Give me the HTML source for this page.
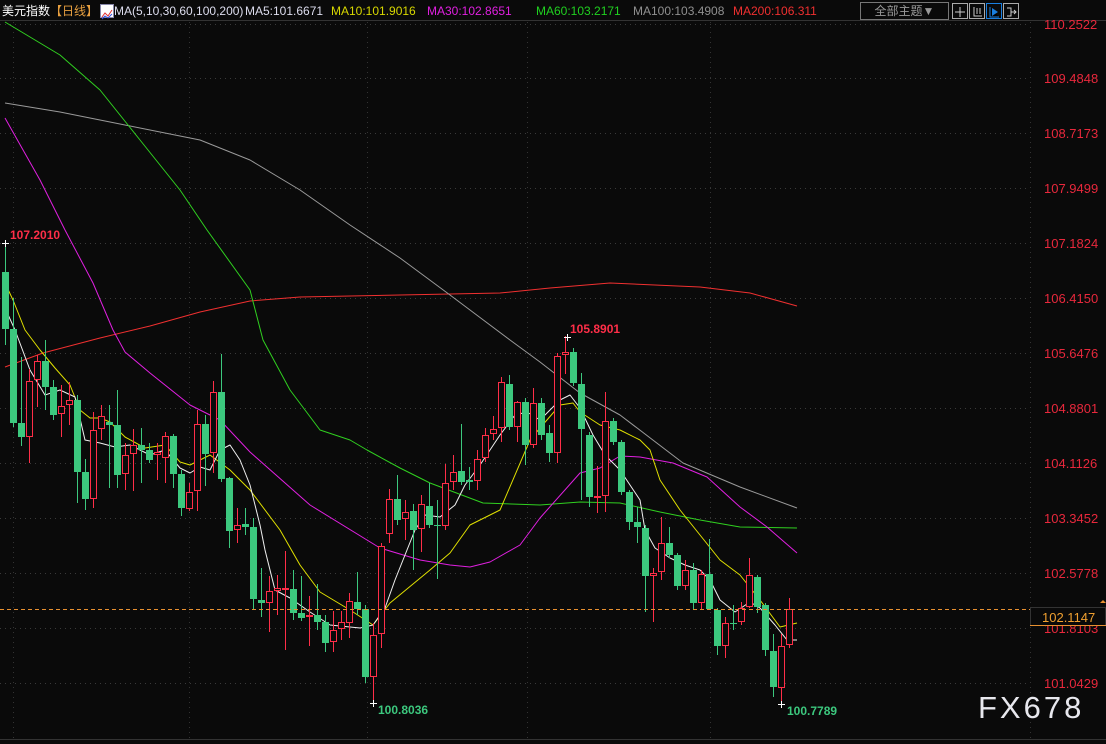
<!DOCTYPE html>
<html><head><meta charset="utf-8"><style>
html,body{margin:0;padding:0;background:#0a0a0a;width:1106px;height:744px;overflow:hidden;font-family:"Liberation Sans","Noto Sans CJK SC",sans-serif}
#top{position:absolute;left:0;top:0;width:1106px;height:22px;font-size:12px;line-height:22px;white-space:nowrap}
#top span{position:absolute;top:0}
</style></head><body>
<svg id="c" width="1106" height="744" style="position:absolute;left:0;top:0"></svg>
<div id="top">
<span style="left:2px;color:#fff">美元指数</span>
<span style="left:50px;color:#e8a040">【日线】</span>
<span style="left:100px;top:4px;width:12px;height:12px;background:#fff;border:1px solid #88a"><svg width="12" height="12"><polyline points="1,9 4,5 7,8 11,2" stroke="#e03030" fill="none"/><polyline points="1,11 4,8 7,10 11,6" stroke="#3050e0" fill="none"/></svg></span>
<span style="left:114px;color:#dde">MA(5,10,30,60,100,200)</span>
<span style="left:245px;color:#dde">MA5:101.6671</span>
<span style="left:331px;color:#d8d800">MA10:101.9016</span>
<span style="left:427px;color:#e020e0">MA30:102.8651</span>
<span style="left:536px;color:#20d020">MA60:103.2171</span>
<span style="left:633px;color:#909090">MA100:103.4908</span>
<span style="left:733px;color:#f03030">MA200:106.311</span>
<span style="left:860px;top:2px;width:87px;height:16px;border:1px solid #777;color:#999;line-height:16px;text-align:center">全部主题▼</span>
<span style="left:952px;top:3px;width:14px;height:14px;border:1px solid #aaa"><svg width="14" height="14"><path d="M7 2v10M2 7h10" stroke="#ccc"/></svg></span>
<span style="left:969px;top:3px;width:14px;height:14px;border:1px solid #aaa"><svg width="14" height="14"><path d="M4 2v9h8M7 3v6M10 3v6" stroke="#ccc"/></svg></span>
<span style="left:986px;top:3px;width:14px;height:14px;border:1px solid #1a7fe0"><svg width="14" height="14"><path d="M3 2v10h9" stroke="#1a7fe0"/><path d="M5 3l6 4-6 4z" fill="#1a7fe0"/></svg></span>
<span style="left:1003px;top:3px;width:14px;height:14px;border:1px solid #aaa"><svg width="14" height="14"><path d="M3 3h4v8H3M7 7h5M10 5l2 2-2 2" stroke="#ccc" fill="none"/></svg></span>
</div>
<div style="position:absolute;left:978px;top:690px;color:#e8e8ee;font-size:31px;letter-spacing:3px;font-family:'Liberation Sans',sans-serif">FX678</div>
<script>
var s='';
var NS=document.getElementById('c');
s+='<line x1="0" y1="20.5" x2="1106" y2="20.5" stroke="#333"/>';
var labs=[["110.2522",24],["109.4848",78],["108.7173",133],["107.9499",188],["107.1824",243],["106.4150",298],["105.6476",353],["104.8801",408],["104.1126",463],["103.3452",518],["102.5778",573],["101.8103",628],["101.0429",683]];
labs.forEach(function(l){s+='<line x1="0" y1="'+(l[1]+.5)+'" x2="1030" y2="'+(l[1]+.5)+'" stroke="#3a3a3a" stroke-dasharray="1,4"/>';
s+='<text x="1044" y="'+(l[1]+5)+'" fill="#e8283c" font-size="13" font-family="Liberation Sans">'+l[0]+'</text>';});
[13,189,367,527,710].forEach(function(x){s+='<line x1="'+x+'.5" y1="22" x2="'+x+'.5" y2="740" stroke="#333" stroke-dasharray="1,4"/>';});
s+='<line x1="1030.5" y1="22" x2="1030.5" y2="740" stroke="#333" stroke-dasharray="1,4"/>';
s+='<line x1="0" y1="739.5" x2="1106" y2="739.5" stroke="#333"/>';
function pl(p,c){s+='<polyline points="'+p+'" fill="none" stroke="'+c+'" stroke-width="1" stroke-linejoin="round"/>';}
pl("5,367 43,353 100,338 150,326 200,312 250,301 300,297 400,295 500,293 550,288 610,283 700,287 750,293 797,306","#f03030");
pl("5,103 60,112 120,124 200,140 250,160 300,190 350,225 400,258 450,295 510,340 540,362 580,393 620,415 683,463 740,487 797,508","#9a9a9a");
pl("5,22 60,55 100,90 140,140 180,190 207,230 250,290 263,340 290,390 320,430 350,440 367,450 400,468 430,483 483,503 540,505 580,502 620,503 660,512 700,520 740,527 797,528","#30d020");
pl("5,118 40,180 65,230 93,283 113,330 125,352 150,373 190,405 220,420 250,452 310,505 380,548 420,560 450,565 470,567 490,562 520,545 540,518 580,473 600,468 620,456 640,457 673,463 707,477 740,507 767,527 797,553","#e020e0");
pl("5,283 13,300 25,330 40,350 55,368 70,385 80,410 90,418 100,418 110,422 125,437 145,448 165,445 180,462 190,465 210,455 230,470 250,490 280,530 300,565 320,592 350,610 373,625 390,603 430,570 450,553 470,525 500,510 530,440 540,428 560,405 573,403 580,412 600,425 620,430 640,440 650,450 660,480 680,510 700,535 720,560 740,575 760,600 780,627 797,623","#e0e000");
pl("5,308 15,330 30,370 45,395 60,390 75,397 85,440 100,443 115,447 130,445 150,455 165,450 180,468 190,473 200,467 210,470 220,450 230,445 240,460 250,485 260,525 265,550 275,590 290,598 310,612 330,625 360,628 373,625 385,608 395,580 403,560 415,530 425,515 440,517 455,505 465,485 480,465 500,435 515,415 527,412 540,420 560,400 570,395 580,408 593,435 605,455 620,470 640,500 645,530 655,548 670,558 685,565 700,570 710,580 720,600 735,612 750,602 760,608 775,625 787,640 797,640","#f0f0f0");
var C=[
['g',272,329,242,345],['g',329,423,298,427],['g',423,437,357,446],['r',381,437,369,463],['r',361,380,355,407],['g',361,387,340,410],['g',387,415,380,420],['r',406,414,385,437],['r',400,405,382,425],['g',400,472,395,503],
['g',472,499,459,510],['r',430,499,412,508],['r',416,429,405,440],['g',422,425,405,488],['g',425,475,390,488],['r',455,474,443,490],['r',445,454,429,491],['g',445,450,428,483],['g',450,460,443,463],['r',452,455,443,480],
['r',436,458,432,483],['g',436,474,434,488],['g',474,508,470,516],['r',492,509,483,511],['r',424,491,410,511],['g',424,454,415,486],['r',392,453,381,473],['g',392,479,354,482],['g',478,531,477,548],['r',525,530,508,543],
['g',524,527,508,535],['g',527,599,518,610],['g',600,603,568,617],['r',591,603,576,632],['r',588,591,575,615],['r',588,590,551,650],['g',589,613,570,620],['g',613,618,576,621],['r',615,617,596,646],['g',615,622,584,630],
['g',622,643,615,652],['r',630,642,611,652],['r',622,629,611,640],['r',601,623,593,638],['g',602,609,572,615],['g',609,677,605,683],['r',635,677,623,703],['r',546,634,543,648],['r',499,534,489,543],['g',499,520,475,525],
['r',512,519,500,540],['g',511,530,504,570],['r',504,529,495,552],['g',506,525,483,528],['g',525,526,500,579],['r',483,526,464,530],['r',472,482,455,490],['g',471,482,424,485],['g',480,482,467,490],['r',459,481,450,490],
['r',435,458,428,462],['r',429,434,416,440],['r',382,428,377,442],['g',384,427,375,430],['r',402,427,401,442],['g',402,445,398,465],['r',403,445,388,448],['g',403,435,398,440],['g',433,453,425,462],['r',356,453,353,463],
['r',352,355,336,374],['g',352,383,348,386],['g',384,429,373,500],['g',435,497,432,507],['r',496,497,466,513],['r',421,496,392,512],['g',421,442,418,445],['g',442,492,440,495],['g',492,522,490,530],['g',522,527,507,543],
['g',528,576,525,612],['r',573,576,568,622],['r',543,572,517,580],['g',543,555,527,558],['g',555,586,553,590],['r',570,586,560,590],['g',570,603,563,609],['r',574,603,570,609],['g',574,609,539,609],['g',610,646,608,655],
['r',623,646,617,658],['g',623,624,605,630],['r',608,622,602,625],['r',575,607,558,608],['g',577,607,575,613],['g',605,650,603,656],['g',651,687,634,697],['r',646,688,634,703],['r',609,645,598,648]];
C.forEach(function(c,i){var x=5.3+8*i;var col=c[0]=='g'?'#3cc87e':'#ff2e48';var cx=Math.round(x)+.5;
var h=Math.max(c[2]-c[1],1);
if(c[0]=='g'){s+='<line x1="'+cx+'" y1="'+c[3]+'" x2="'+cx+'" y2="'+c[4]+'" stroke="'+col+'"/>';s+='<rect x="'+(cx-3.5)+'" y="'+c[1]+'" width="7" height="'+h+'" fill="'+col+'"/>';}
else{s+='<line x1="'+cx+'" y1="'+c[3]+'" x2="'+cx+'" y2="'+c[1]+'" stroke="'+col+'"/><line x1="'+cx+'" y1="'+c[2]+'" x2="'+cx+'" y2="'+c[4]+'" stroke="'+col+'"/>';s+='<rect x="'+(cx-3)+'" y="'+(c[1]+.5)+'" width="6" height="'+Math.max(h-1,1)+'" fill="#0a0a0a" stroke="'+col+'"/>';}
});
s+='<line x1="0" y1="609.5" x2="1030" y2="609.5" stroke="#e89030" stroke-dasharray="4,3"/>';
s+='<rect x="1030.5" y="607.5" width="75" height="18" fill="#0a0a0a" stroke="#333"/><line x1="1030" y1="625.5" x2="1106" y2="625.5" stroke="#e89030"/>';
s+='<text x="1042" y="622" fill="#f0a030" font-size="13" font-family="Liberation Sans">102.1147</text>';
s+='<path d="M1100 603 l3 -3 l3 3 z" fill="#e89030"/>';
function mk(x,y){s+='<path d="M'+(x-3)+' '+y+'.5h7M'+x+'.5 '+(y-3)+'v7" stroke="#fff"/>';}
mk(5,243);mk(567,337);mk(373,703);mk(781,704);
s+='<text x="10" y="239" fill="#ff2e48" font-size="12" font-weight="bold" font-family="Liberation Sans">107.2010</text>';
s+='<text x="570" y="333" fill="#ff2e48" font-size="12" font-weight="bold" font-family="Liberation Sans">105.8901</text>';
s+='<text x="378" y="714" fill="#3cc87e" font-size="12" font-weight="bold" font-family="Liberation Sans">100.8036</text>';
s+='<text x="787" y="715" fill="#3cc87e" font-size="12" font-weight="bold" font-family="Liberation Sans">100.7789</text>';
NS.innerHTML=s;
</script>
</body></html>
